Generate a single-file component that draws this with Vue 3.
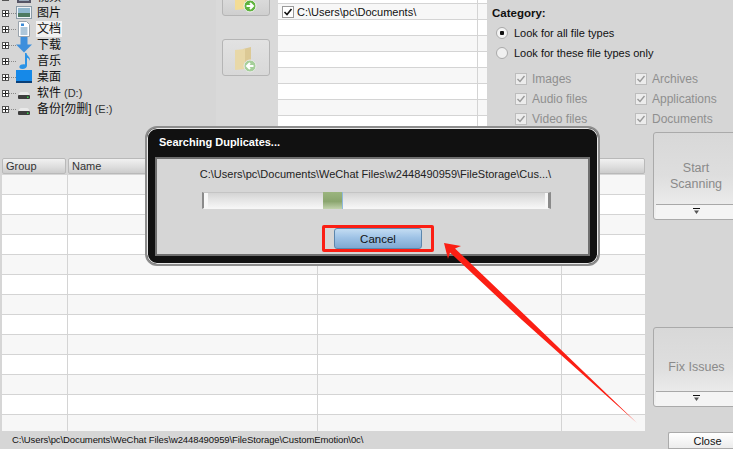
<script setup>
const tree = [
  { label: '视频', kind: 'video' },
  { label: '图片', kind: 'pic' },
  { label: '文档', kind: 'doc', sel: true },
  { label: '下载', kind: 'down' },
  { label: '音乐', kind: 'music' },
  { label: '桌面', kind: 'desk' },
  { label: '软件', sub: '(D:)', kind: 'drive' },
  { label: '备份[勿删]', sub: '(E:)', kind: 'drive' },
]
const listRows = Array.from({ length: 10 }, (_, i) => i)
const cats = ['Images', 'Archives', 'Audio files', 'Applications', 'Video files', 'Documents']
const rows = Array.from({ length: 13 }, (_, i) => i)
</script>

<template>
  <div class="app">
    <section class="top">
      <div class="tree">
        <div v-for="t in tree" :key="t.label" class="tree-row">
          <span class="exp"></span>
          <span class="dots"></span>
          <svg class="ico" viewBox="0 0 16 16">
            <g v-if="t.kind === 'video'"><rect x="1" y="2" width="14" height="12" fill="#556"/><rect x="3" y="4" width="10" height="8" fill="#9ab"/></g>
            <g v-else-if="t.kind === 'pic'"><rect x=".5" y="1.500" width="15" height="12" fill="#eef3f7" stroke="#8a9aa6"/><rect x="2" y="3" width="12" height="5" fill="#8fb8cf"/><rect x="2" y="8" width="12" height="4" fill="#4d7a62"/></g>
            <g v-else-if="t.kind === 'doc'"><path d="M2.500 .5h8l3 3v12h-11z" fill="#fff" stroke="#9aa4ad"/><path d="M5 2.500h3v2.500H5z" fill="#3a8ad6"/><path d="M4.500 7h7M4.500 9h7M4.500 11h7M4.500 13h7" stroke="#5d8fb5"/></g>
            <g v-else-if="t.kind === 'down'"><path d="M4.500 0h7v7.500H16L8 15.500 0 7.500h4.500z" fill="#3d8fdc"/></g>
            <g v-else-if="t.kind === 'music'"><path d="M9 0h1.500c.3 3 4 3.500 3.500 8-.5-2-2-3-3-3.200V12.500c0 2-2 3.500-4.500 3.500S3 14.800 3.500 13.300 6.500 10.800 9 11.500z" fill="#2a93e6"/></g>
            <g v-else-if="t.kind === 'desk'"><rect x="0" y="1" width="16" height="12" fill="#1689e8"/><rect x="0" y="12" width="16" height="2" fill="#0a3f78"/></g>
            <g v-else><path d="M3 9c0-1 1-2 2-2h6c1 0 2 1 2 2v1H3z" fill="#e9e9e9"/><rect x="2" y="10" width="12" height="4" rx="1" fill="#3d3d3d"/><rect x="11" y="11.500" width="1.500" height="1.500" fill="#35d04a"/></g>
          </svg>
          <span class="tree-label" :class="{ sel: t.sel }">{{ t.label }}<span v-if="t.sub" class="sub">{{ t.sub }}</span></span>
        </div>
      </div>

      <div class="movers">
        <button class="mover">
          <svg viewBox="0 0 24 24" class="mover-ico"><path d="M9 3l8-2v20H9z" fill="#e3c577"/><path d="M1 4l10-1v20L1 24z" fill="#f3dc95"/><circle cx="16" cy="20" r="6" fill="#5fb33e" stroke="#f4f4f4"/><path d="M12.500 20h6.500M16 17l3 3-3 3" fill="none" stroke="#fff" stroke-width="2"/></svg>
        </button>
        <button class="mover off">
          <svg viewBox="0 0 24 24" class="mover-ico"><path d="M9 3l8-2v20H9z" fill="#dcc995"/><path d="M1 4l10-1v20L1 24z" fill="#e8d8a8"/><circle cx="16" cy="20" r="6" fill="#a5cf9a" stroke="#eaeaea"/><path d="M19.500 20h-6.500M16 17l-3 3 3 3" fill="none" stroke="#fff" stroke-width="2"/></svg>
        </button>
      </div>

      <div class="list">
        <div v-for="i in listRows" :key="i" class="list-row" :class="{ alt: i % 2 === 1 }">
          <div class="list-main">
            <template v-if="i === 1">
              <span class="chk"><svg viewBox="0 0 10 10"><path d="M1.500 5l2.500 2.500L8.500 2" fill="none" stroke="#111" stroke-width="1.600"/></svg></span>
              <span>C:\Users\pc\Documents\</span>
            </template>
          </div>
        </div>
      </div>

      <div class="options">
        <div class="cat-title">Category:</div>
        <label class="radio-row"><span class="radio on"></span>Look for all file types</label>
        <label class="radio-row"><span class="radio"></span>Look for these file types only</label>
        <div class="cats">
          <div v-for="c in cats" :key="c" class="cat">
            <span class="chk dim"><svg viewBox="0 0 10 10"><path d="M1.500 5l2.500 2.500L8.500 2" fill="none" stroke="#9a9a9a" stroke-width="1.400"/></svg></span>{{ c }}
          </div>
        </div>
      </div>
    </section>

    <section class="mid">
      <div class="table">
        <div class="thead">
          <div class="th group">Group</div>
          <div class="th name">Name</div>
          <div class="th rest"></div>
        </div>
        <div v-for="r in rows" :key="r" class="tr" :class="{ alt: r % 2 === 0 }">
          <div class="td c1"></div>
          <div class="td c2"></div>
          <div class="td c3"></div>
          <div class="td c4"></div>
        </div>
      </div>
      <aside class="actions">
        <button class="big start">
          <span class="big-text">Start<br />Scanning</span>
          <span class="big-drop"><svg class="tri" viewBox="0 0 7 6"><path d="M0 .5h7" stroke="#111"/><path d="M1 2.500h5L3.500 6z" fill="#555"/></svg></span>
        </button>
        <button class="big fix">
          <span class="big-text">Fix Issues</span>
          <span class="big-drop"><svg class="tri" viewBox="0 0 7 6"><path d="M0 .5h7" stroke="#111"/><path d="M1 2.500h5L3.500 6z" fill="#555"/></svg></span>
        </button>
      </aside>
    </section>

    <footer class="status">
      <span class="status-path">C:\Users\pc\Documents\WeChat Files\w2448490959\FileStorage\CustomEmotion\0c\</span>
      <button class="close">Close</button>
    </footer>

    <div class="dialog">
      <div class="dlg-title">Searching Duplicates...</div>
      <div class="dlg-body">
        <div class="dlg-path">C:\Users\pc\Documents\WeChat Files\w2448490959\FileStorage\Cus...\</div>
        <div class="bar"><i class="bar-fill"></i></div>
        <div class="cancel-ring"><button class="cancel">Cancel</button></div>
      </div>
    </div>

    <svg class="arrow" viewBox="0 0 733 449" width="733" height="449">
      <path d="M444 243 L461 246 L455 248.500 L530 320 L637 423 L522 320 L450 252.500 L448 259 Z" fill="#fb1f14"/>
    </svg>
  </div>
</template>

<style scoped>
.app {
  position: relative;
  width: 733px;
  height: 449px;
  overflow: hidden;
  background: #d6d6d6;
  font-family: "Liberation Sans", "Noto Sans CJK SC", sans-serif;
  font-size: 12px;
  color: #111;
}
button { font-family: inherit; padding: 0; }

.top {
  height: 158px;
  display: flex;
  overflow: hidden;
}
.tree {
  width: 216px;
  margin-top: -11px;
  flex: none;
}
.tree-row {
  height: 16px;
  display: flex;
  align-items: center;
  padding-left: 2px;
}
.exp {
  width: 7px;
  height: 7px;
  flex: none;
  border: 1px solid #555;
  box-sizing: border-box;
  background:
    linear-gradient(#222, #222) center / 5px 1px no-repeat,
    linear-gradient(#222, #222) center / 1px 5px no-repeat,
    #fff;
}
.dots {
  width: 7px;
  flex: none;
  border-top: 1px dotted #888;
}
.ico { width: 16px; height: 16px; flex: none; }
.tree-label {
  margin-left: 4px;
  height: 16px;
  line-height: 16px;
  padding: 0 1px;
  font-size: 12px;
  white-space: nowrap;
}
.tree-label.sel { background: #f2f2f2; }
.sub { color: #333; font-size: 11px; margin-left: 3px; }

.movers {
  width: 62px;
  flex: none;
  box-sizing: border-box;
  padding-left: 6px;
  margin-top: -21px;
  display: flex;
  flex-direction: column;
  gap: 23px;
  height: 148px;
  background: #d9d9d9;
}
.mover {
  width: 48px;
  height: 37px;
  border: 1px solid #b5b5b5;
  border-radius: 3px;
  background: linear-gradient(#e8e8e8, #dcdcdc 50%, #cfcfcf);
  display: flex;
  align-items: center;
  justify-content: center;
  flex: none;
}
.mover.off { background: linear-gradient(#e2e2e2, #d8d8d8); }
.mover-ico { width: 24px; height: 24px; overflow: visible; }

.list {
  width: 209px;
  flex: none;
  margin-top: -12px;
  align-self: flex-start;
}
.list-row {
  height: 16px;
  background: #fff;
  box-sizing: border-box;
  border-bottom: 1px solid #d4d4d4;
  padding-right: 9px;
  display: flex;
}
.list-row.alt { background: #f7f7f7; }
.list-main {
  flex: 1;
  border-right: 1px solid #d4d4d4;
  display: flex;
  align-items: center;
  gap: 3px;
  padding-left: 4px;
  font-size: 11px;
  white-space: nowrap;
}
.chk {
  width: 12px;
  height: 12px;
  box-sizing: border-box;
  border: 1px solid #9a9a9a;
  background: #fff;
  display: inline-flex;
  flex: none;
}
.chk svg { width: 10px; height: 10px; }
.chk.dim { border-color: #bdbdbd; background: #ececec; margin-right: 5px; }

.options {
  margin-left: 5px;
  padding-top: 6px;
  font-size: 11px;
}
.cat-title { font-weight: bold; font-size: 11.500px; height: 14px; line-height: 14px; }
.radio-row {
  height: 20px;
  display: flex;
  align-items: center;
  gap: 6px;
  margin-left: 4px;
}
.radio-row:first-of-type { margin-top: 3px; }
.radio {
  width: 12px;
  height: 12px;
  box-sizing: border-box;
  border-radius: 50%;
  border: 1px solid #aaa;
  background: #f0f0f0;
  display: inline-block;
}
.radio.on { background: radial-gradient(circle, #111 0 2px, #f4f4f4 2.500px); }
.cats {
  display: grid;
  grid-template-columns: 120px 100px;
  grid-auto-rows: 20px;
  margin: 6px 0 0 23px;
  color: #8f8f8f;
  font-size: 12px;
}
.cat { display: flex; align-items: center; white-space: nowrap; }

.mid {
  position: relative;
  height: 273px;
  display: flex;
  padding-left: 2px;
}
.table { width: 643px; height: 273px; flex: none; overflow: hidden; }
.thead { height: 17px; display: flex; gap: 2px; }
.th {
  box-sizing: border-box;
  height: 16px;
  line-height: 14px;
  padding-left: 3px;
  border: 1px solid #b9b9b9;
  border-radius: 2px;
  background: linear-gradient(#f1f1f1, #dcdcdc 60%, #cccccc);
  font-size: 11px;
  color: #333;
}
.group { width: 64px; }
.name { width: 248px; }
.rest { flex: 1; }
.tr {
  height: 20px;
  display: flex;
  background: #fff;
  box-sizing: border-box;
  border-bottom: 1px solid #d4d4d4;
}
.tr.alt { background: #f7f7f7; }
.td { box-sizing: border-box; border-right: 1px solid #d4d4d4; }
.c1 { width: 66px; }
.c2 { width: 250px; }
.c3 { width: 244px; }
.c4 { flex: 1; border-right: 0; }

.actions {
  margin-left: 8px;
  margin-top: -26px;
  flex: 1;
  display: flex;
  flex-direction: column;
  gap: 107px;
}
.big {
  box-sizing: border-box;
  margin-right: -6px;
  border: 1px solid #aaa;
  border-radius: 3px;
  background: linear-gradient(#d8d8d8, #dedede 50%, #f2f2f2);
  color: #8a8a8a;
  display: flex;
  flex-direction: column;
  font-size: 12.500px;
  line-height: 16px;
}
.start { height: 88px; }
.fix { height: 80px; }
.big-text {
  flex: 1;
  display: flex;
  align-items: center;
  justify-content: center;
  text-align: center;
}
.start .big-text { padding-top: 15px; }
.fix .big-text { padding-top: 15px; padding-left: 1px; }
.big-drop {
  height: 15px;
  margin: 0 2px;
  border-top: 1px solid #a8a8a8;
  background: #f4f4f4;
  display: flex;
  justify-content: center;
  padding-top: 3px;
  box-sizing: border-box;
}
.tri { width: 7px; height: 6px; }

.status {
  height: 18px;
  display: flex;
  justify-content: space-between;
  padding-left: 12px;
}
.status-path { font-size: 9.500px; line-height: 18px; letter-spacing: -.1px; white-space: nowrap; }
.close {
  width: 65px;
  height: 17px;
  margin-top: 1px;
  box-sizing: border-box;
  border: 1px solid #aaa;
  border-right: 0;
  border-radius: 2px 0 0 0;
  background: linear-gradient(#fff, #ececec);
  font-size: 11px;
  color: #111;
  padding-left: 13px;
}

.dialog {
  position: absolute;
  left: 145px;
  top: 126px;
  width: 455px;
  height: 140px;
  box-sizing: border-box;
  background: #111;
  border: 2px solid #8d8d8d;
  border-radius: 12px;
  box-shadow: 0 0 0 1px #e8e8e8 inset;
  padding: 0 8px 8px;
  display: flex;
  flex-direction: column;
}
.dlg-title {
  height: 29px;
  line-height: 28px;
  padding-left: 4px;
  color: #fff;
  font-size: 11px;
  font-weight: bold;
}
.dlg-body {
  flex: 1;
  box-sizing: border-box;
  border: 2px solid #6f6f6f;
  background: #d6d6d6;
  display: flex;
  flex-direction: column;
  align-items: center;
  padding-left: 6px;
}
.dlg-path {
  margin-top: 7px;
  font-size: 11px;
  line-height: 16px;
  color: #222;
  white-space: nowrap;
}
.bar {
  position: relative;
  width: 349px;
  height: 17px;
  margin-top: 10px;
  margin-left: 2px;
  box-sizing: border-box;
  border: 1px solid #f6f6f6;
  border-top-color: #c4c4c4;
  border-left: 2px solid #8a8a8a;
  border-right: 3px solid #8a8a8a;
  background:
    linear-gradient(#f7f7f7, #f7f7f7) left / 4px 100% no-repeat,
    linear-gradient(#f7f7f7, #f7f7f7) right / 3px 100% no-repeat,
    linear-gradient(#d4d4d4, #e6e6e6 50%, #f6f6f6);
}
.bar-fill {
  position: absolute;
  left: 119px;
  top: -1px;
  bottom: -1px;
  width: 19px;
  background: linear-gradient(#9bb57e, #8aa56e 55%, #c2d2ad);
  border-right: 1px solid #8fb8de;
}
.cancel-ring {
  margin-top: 16px;
  margin-left: 5px;
  box-sizing: border-box;
  width: 112px;
  height: 27px;
  border: 3px solid #fb1f14;
  border-radius: 2px;
  display: flex;
  align-items: center;
  justify-content: center;
}
.cancel {
  width: 88px;
  height: 21px;
  box-sizing: border-box;
  border: 1px solid #5c86ad;
  border-radius: 3px;
  background: linear-gradient(#c3dcf2, #9fc3e6 45%, #7fa9d1);
  font-size: 11.500px;
  color: #111;
}
.arrow { position: absolute; left: 0; top: 0; pointer-events: none; }
</style>
